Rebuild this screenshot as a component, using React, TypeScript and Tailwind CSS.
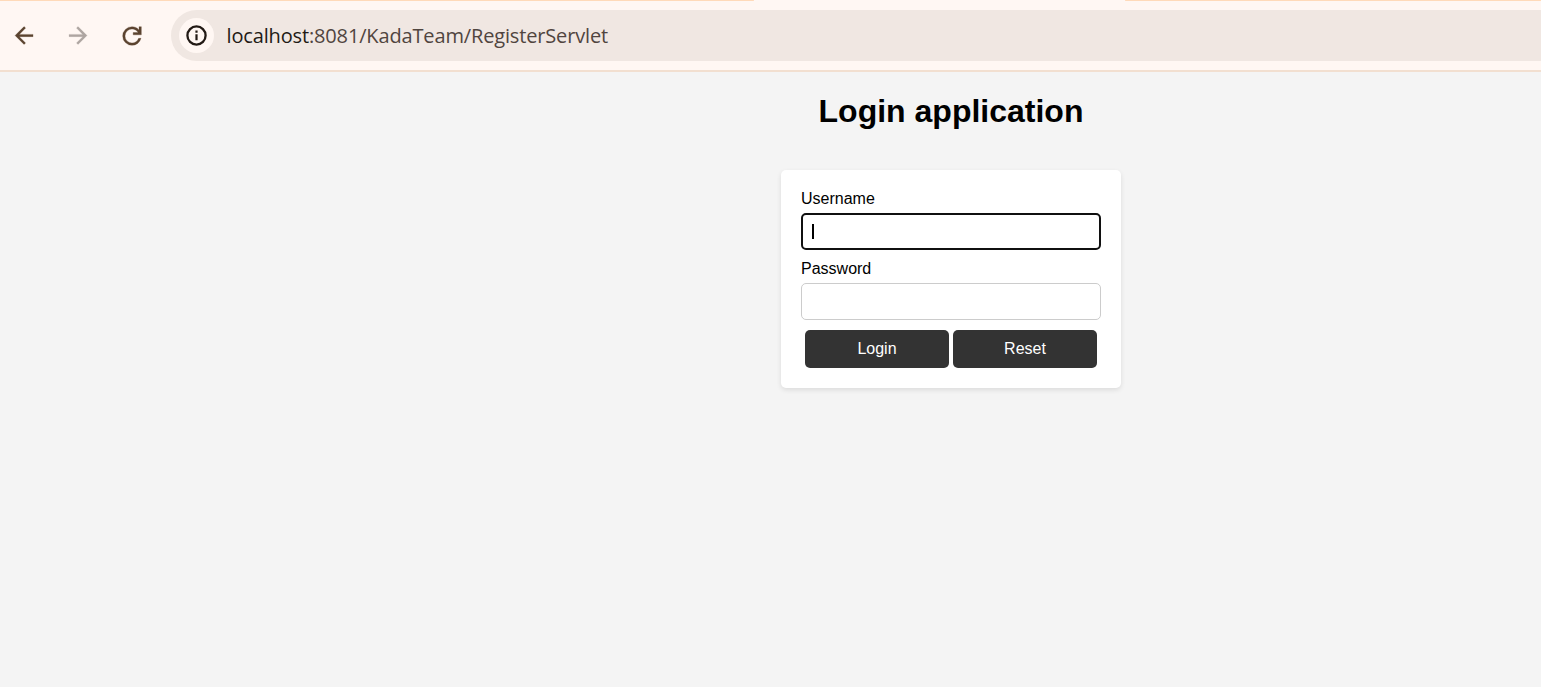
import React from 'react';

function Toolbar() {
  return (
    <header className="flex h-[72px] flex-col border-b-2 border-[#f2dfd0] bg-[#fff7f3]">
      <div className="flex h-px justify-between">
        <div className="w-[754px] rounded-r-full bg-[#ffdab9]" />
        <div className="w-[416px] rounded-l-full bg-[#ffdab9]" />
      </div>
      <div className="mt-[9px] flex h-[51px] items-center">
        <svg className="ml-[11px] h-[27px] w-[27px] shrink-0" viewBox="0.4 0 24 24" fill="#5b432f" stroke="#5b432f" strokeWidth="0.2">
          <path d="M20 11H7.83l5.59-5.59L12 4l-8 8 8 8 1.41-1.41L7.83 13H20v-2z" />
        </svg>
        <svg className="ml-[27px] h-[27px] w-[27px] shrink-0" viewBox="0.4 0 24 24" fill="#aea5a1" stroke="#aea5a1" strokeWidth="0.2">
          <path d="M12 4l-1.41 1.41L16.17 11H4v2h12.17l-5.58 5.59L12 20l8-8z" />
        </svg>
        <svg className="ml-[26px] h-7 w-7 shrink-0" viewBox="0 -960 960 960" fill="#5b432f" stroke="#5b432f" strokeWidth="10">
          <path d="M480-160q-134 0-227-93t-93-227q0-134 93-227t227-93q69 0 132 28.5T720-690v-110h80v280H520v-80h168q-32-56-87.5-88T480-720q-100 0-170 70t-70 170q0 100 70 170t170 70q77 0 139-44t87-116h84q-28 106-114 173t-196 67Z" />
        </svg>
        <div className="ml-[25px] flex h-full flex-1 items-center rounded-l-full bg-[#f0e7e2] pl-2">
          <div className="flex h-[35px] w-[35px] items-center justify-center rounded-full bg-[#fff7f3]">
            <svg className="h-[21px] w-[21px]" viewBox="0 0 21 21" fill="none">
              <circle cx="10.5" cy="10.5" r="9.1" stroke="#221a15" strokeWidth="2.3" />
              <path d="M9.4 9.3h2.2v6H9.4zM9.4 5.5h2.2v2.2H9.4z" fill="#221a15" />
            </svg>
          </div>
          <span className="ml-[12.5px] whitespace-nowrap font-['Open_Sans','Noto_Sans',sans-serif] text-[20px] leading-[28px] tracking-[-0.15px] text-[#50453f]">
            <span className="text-[#221a15]">localhost</span>:8081/KadaTeam/RegisterServlet
          </span>
        </div>
      </div>
    </header>
  );
}

export default function App() {
  return (
    <div className="flex h-[687px] flex-col overflow-hidden bg-[#f4f4f4] font-['Liberation_Sans',Arial,sans-serif] text-black">
      <Toolbar />
      <main className="ml-[781px] flex w-[340px] flex-col">
        <h1 className="mt-[21px] text-center text-[32px] font-bold leading-[37px]">Login application</h1>
        <form
          className="mt-[40px] flex h-[218px] flex-col rounded-[5px] bg-white px-5 pt-5 shadow-[0_2px_5px_rgba(0,0,0,0.1)]"
          onSubmit={(e) => e.preventDefault()}
        >
          <label htmlFor="username" className="text-[16px] leading-[18px]">Username</label>
          <div className="relative mt-[5px] h-[37px]">
            <input
              id="username"
              className="block h-full w-full rounded-[5px] border-2 border-[#101010] bg-white px-2 caret-transparent outline-none"
            />
            <span className="absolute left-[11px] top-[11px] h-[15px] w-[2px] bg-black" />
          </div>
          <label htmlFor="password" className="mt-[10px] text-[16px] leading-[18px]">Password</label>
          <input
            id="password"
            type="password"
            className="mt-[5px] block h-[37px] w-full rounded-[5px] border border-[#cccccc] bg-white px-2 outline-none"
          />
          <div className="mt-[10px] flex justify-center gap-1">
            <button type="submit" className="h-[38px] w-36 rounded-[5px] bg-[#333333] text-[16px] leading-[18px] text-white">Login</button>
            <button type="reset" className="h-[38px] w-36 rounded-[5px] bg-[#333333] text-[16px] leading-[18px] text-white">Reset</button>
          </div>
        </form>
      </main>
    </div>
  );
}
